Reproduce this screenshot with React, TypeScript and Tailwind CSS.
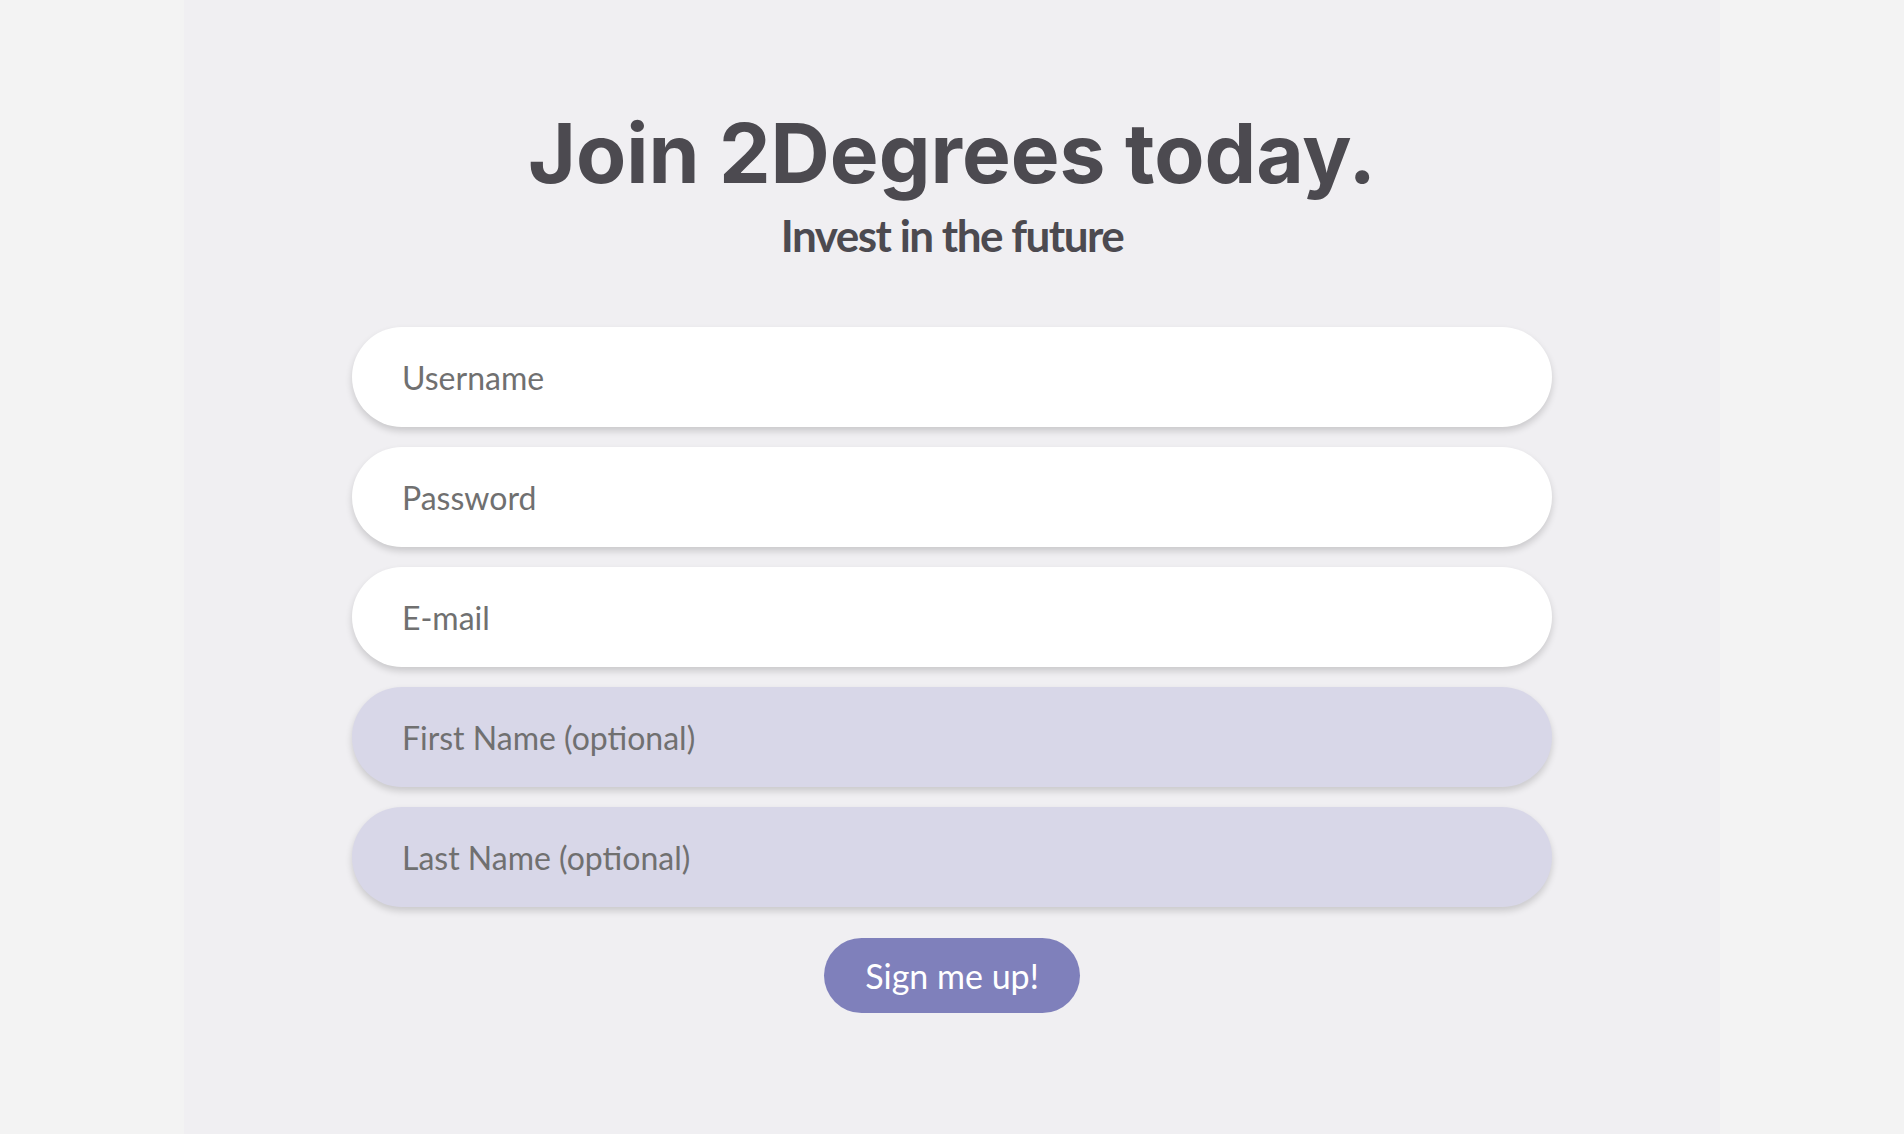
import { useState } from 'react';

const fields = [
    { name: 'username', label: 'Username', type: 'text', optional: false },
    { name: 'password', label: 'Password', type: 'password', optional: false },
    { name: 'email', label: 'E-mail', type: 'email', optional: false },
    { name: 'firstName', label: 'First Name (optional)', type: 'text', optional: true },
    { name: 'lastName', label: 'Last Name (optional)', type: 'text', optional: true },
];

export default function App() {
    const [values, setValues] = useState<Record<string, string>>({});

    return (
        <div className="min-h-screen bg-[#f3f3f3] font-['Lato',sans-serif]">
            <div className="mx-auto w-[1536px] min-h-screen bg-[#f0eff2] flex flex-col items-center pt-[104px]">
                {/* Heading */}
                <h1 className="font-['Inter',sans-serif] font-bold text-[82px] leading-[100px] tracking-[0px] text-[#4c4a50]">
                    Join 2Degrees today.
                </h1>
                <h2 className="mt-[6px] font-bold text-[44px] leading-[50px] tracking-[-1.5px] text-[#4c4a50]">
                    Invest in the future
                </h2>

                {/* Form */}
                <form
                    className="mt-[67px] w-[1200px] flex flex-col gap-[20px]"
                    onSubmit={(e) => e.preventDefault()}
                >
                    {fields.map((f) => (
                        <input
                            key={f.name}
                            type={f.type}
                            placeholder={f.label}
                            value={values[f.name] ?? ''}
                            onChange={(e) => setValues({ ...values, [f.name]: e.target.value })}
                            className={
                                'h-[100px] w-full rounded-full pl-[50px] pr-8 text-[32px] text-[#555] placeholder:text-[#707070] outline-none shadow-[0_4px_7px_rgba(0,0,0,0.16)] ' +
                                (f.optional ? 'bg-[#d8d7e8]' : 'bg-white')
                            }
                        />
                    ))}

                    <button
                        type="submit"
                        className="mt-[11px] self-center h-[75px] w-[256px] rounded-full bg-[#7f80bb] text-white text-[34px] leading-none"
                    >
                        Sign me up!
                    </button>
                </form>
            </div>
        </div>
    );
}
